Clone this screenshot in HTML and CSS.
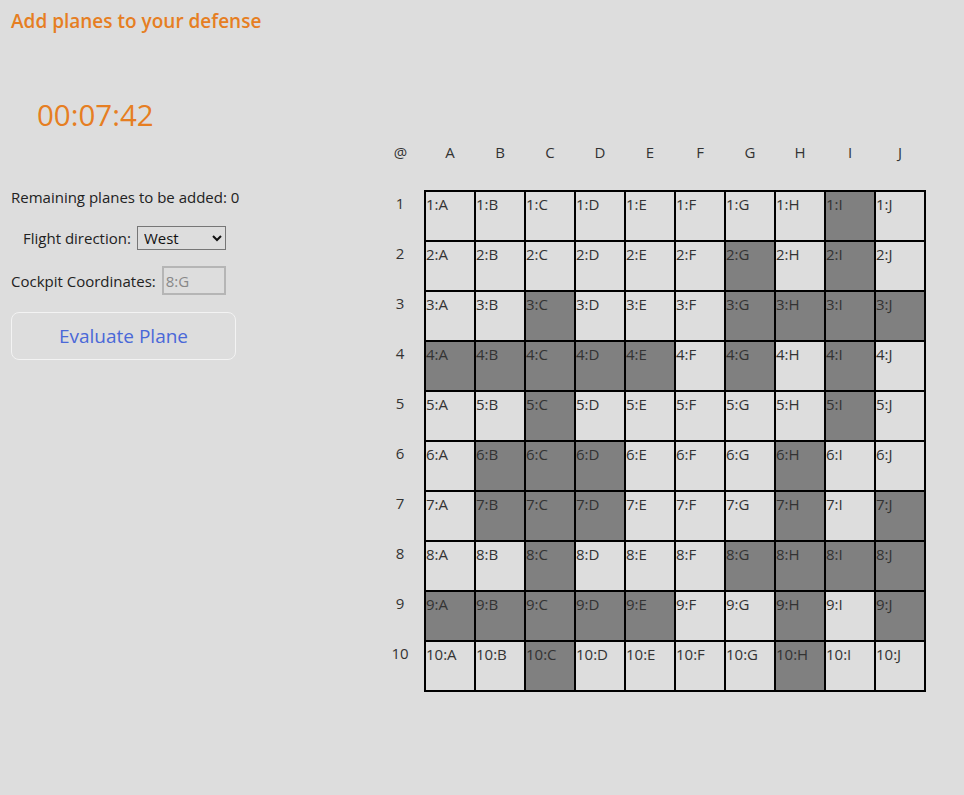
FILE: index.html
```html
<!DOCTYPE html>
<html>
<head>
<meta charset="utf-8">
<link rel="stylesheet" href="styles.css">
</head>
<body>
<h3 class="title">Add planes to your defense</h3>
<div class="main">
  <div class="side">
    <div class="timer">00:07:42</div>
    <p class="remaining">Remaining planes to be added: 0</p>
    <div class="field field-indent">
      <label for="dir">Flight direction:</label>
      <select id="dir" class="select"><option>West</option><option>East</option><option>North</option><option>South</option></select>
    </div>
    <div class="field field-coord">
      <label for="coord">Cockpit Coordinates:</label>
      <input id="coord" class="coord" type="text" value="8:G" disabled>
    </div>
    <button class="evaluate">Evaluate Plane</button>
  </div>
  <table class="board" id="board"></table>
</div>
<script src="script.js"></script>
</body>
</html>
```
FILE: script.js
```js
(function () {
  var cols = ['A','B','C','D','E','F','G','H','I','J'];
  var dark = {
    1: 'I', 2: 'GI', 3: 'CGHIJ', 4: 'ABCDEGI', 5: 'CI', 6: 'BCDH',
    7: 'BCDHJ', 8: 'CGHIJ', 9: 'ABCDEHJ', 10: 'CH'
  };
  var t = document.getElementById('board');
  var head = document.createElement('tr');
  head.className = 'head-row';
  var at = document.createElement('th');
  at.textContent = '@';
  head.appendChild(at);
  cols.forEach(function (c) {
    var th = document.createElement('th');
    th.textContent = c;
    head.appendChild(th);
  });
  t.appendChild(head);
  for (var r = 1; r <= 10; r++) {
    var tr = document.createElement('tr');
    var rh = document.createElement('th');
    rh.textContent = r;
    tr.appendChild(rh);
    cols.forEach(function (c) {
      var td = document.createElement('td');
      td.textContent = r + ':' + c;
      if (dark[r].indexOf(c) >= 0) td.className = 'hit';
      tr.appendChild(td);
    });
    t.appendChild(tr);
  }
})();
```
FILE: styles.css
```css
html, body {
  margin: 0;
  background: #dddddd;
}
body {
  font-family: "Open Sans", "Noto Sans", sans-serif;
  color: #222;
  font-size: 15px;
}
.title {
  margin: 0;
  padding: 8px 11px 0;
  font-size: 19px;
  font-weight: 600;
  color: #e67e22;
}
.main {
  display: flex;
  align-items: flex-start;
}
.side {
  width: 365px;
  padding-left: 11px;
}
.timer {
  margin: 59px 0 0 26px;
  font-size: 29.5px;
  color: #e67e22;
  line-height: 44px;
}
.remaining {
  margin: 50px 0 0;
  line-height: 20px;
}
.field {
  display: flex;
  align-items: center;
  gap: 6px;
  margin-top: 19px;
}
.field-indent {
  padding-left: 12px;
}
.field-coord {
  margin-top: 16px;
}
.select {
  width: 89px;
  height: 24px;
  font-family: inherit;
  font-size: 15px;
  color: #111;
  background: #dddddd;
  border: 1px solid #767676;
  border-radius: 0;
  padding: 0 2px;
}
.coord {
  width: 64px;
  height: 29px;
  box-sizing: border-box;
  font-family: inherit;
  font-size: 15px;
  color: #888;
  background: #dddddd;
  border: 2px solid #b5b5b5;
  padding: 0 2px;
  margin: 0;
}
.evaluate {
  display: block;
  margin-top: 17px;
  width: 225px;
  height: 48px;
  background: #dddddd;
  border: 1px solid #f3f3f3;
  border-radius: 8px;
  font-family: inherit;
  font-size: 19px;
  color: #4a68d8;
}
.board {
  border-collapse: collapse;
  margin-top: 108px;
  color: #333;
  font-size: 15px;
}
.board th {
  width: 48px;
  height: 48px;
  padding: 0;
  font-weight: normal;
  text-align: center;
  vertical-align: top;
  line-height: 24px;
}
.board .head-row th {
  line-height: 20px;
}
.board td {
  width: 48px;
  height: 48px;
  padding: 0;
  border: 2px solid #000;
  vertical-align: top;
  text-align: left;
  line-height: 24px;
}
.board td.hit {
  background: #808080;
}
```
